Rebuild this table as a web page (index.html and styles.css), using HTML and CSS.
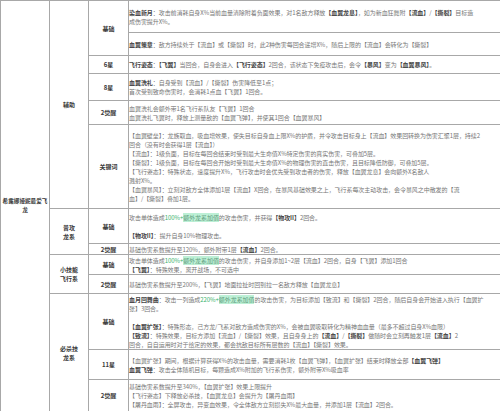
FILE: index.html
```html
<!DOCTYPE html>
<html lang="zh">
<head>
<meta charset="utf-8">
<title>希露娜娅妮最爱飞龙</title>
<link rel="stylesheet" href="styles.css">
</head>
<body>
<table class="sheet">
  <colgroup>
    <col class="w1"><col class="w2"><col class="w3"><col class="w4">
  </colgroup>
  <tbody>
    <tr class="h32">
      <td class="lbl hero" rowspan="13">希露娜娅妮最爱飞龙</td>
      <td class="lbl" rowspan="6">辅助</td>
      <td class="lbl" rowspan="2">基础</td>
      <td class="txt"><b>染血新月</b>：攻击前消耗自身X%当前血量清除附着负面效果，对1名敌方释放<b>【血翼龙息】</b>，如为新血狂舞附<b>【流血】</b>/<b>【撕裂】</b>目标造<br>成伤害提升X%。</td>
    </tr>
    <tr class="h23">
      <td class="txt"><b>血翼策章</b>：敌方持续处于【流血】或【撕裂】时，此2种伤害每回合递增X%，随后上限的【流血】会转化为【撕裂】</td>
    </tr>
    <tr class="h18">
      <td class="lbl">6星</td>
      <td class="txt"><b>飞行姿态</b>：<b>【飞翼】</b>当回合，自身会进入<b>【飞行姿态】</b>2回合，该状态下免疫攻击后，会令<b>【暴风】</b>变为<b>【血翼暴风】</b>。</td>
    </tr>
    <tr class="h27">
      <td class="lbl">8星</td>
      <td class="txt"><b>血翼洗礼</b>：自身受到【流血】/【撕裂】伤害降低至1点；<br>首次受到致命伤害时，会消耗1点血【飞翼】1回合。</td>
    </tr>
    <tr class="h24">
      <td class="lbl">2觉醒</td>
      <td class="txt">血翼洗礼会额外带1名飞行系队友【飞翼】1回合<br>血翼洗礼飞翼时，释放上测量敌的【血翼飞弹】，并使其1回合【血翼暴风】</td>
    </tr>
    <tr class="h84">
      <td class="lbl">关键词</td>
      <td class="txt">【血翼壁垒】：龙族取血，吸血增效果，使失目标自身血上限X%的护盾，并令攻击目标身上【流血】效果回转换为伤害汇聚1层，持续2<br>回合（没有时会获得1层【流血】）<br>【流血】：1级负面，目标在每回合结束时受到最大生命值X%特定伤害的真实伤害，可叠加5层。<br>【撕裂】：1级负面，目标在每回合开始时受到最大生命值X%的物理伤害的直击伤害，且目标降低防御，可叠加5层。<br>【飞行姿态】：特殊状态，速度提升X%，飞行攻击时会优先受到攻击者的伤害，释放【血翼龙息】会向额外X名敌人<br>溅射X%。<br>【血翼暴风】：立刻对敌方全体添加1层【流血】X回合，在暴风基础效果之上，飞行系每次主动攻击，会令暴风之中散发的【流<br>血】/【撕裂】叠加1层。</td>
    </tr>
    <tr class="h35">
      <td class="lbl" rowspan="2">普攻<br>龙系</td>
      <td class="lbl">基础</td>
      <td class="txt">攻击单体造成<span class="g">100%+</span><span class="hl">额外龙系加值</span>的攻击伤害，并获得<b>【物攻II】</b>2回合。<br><br><b>【物攻II】</b>：提升自身10%物理攻击。</td>
    </tr>
    <tr class="h11">
      <td class="lbl">2觉醒</td>
      <td class="txt">基础伤害系数提升至120%，额外附带1层<b>【流血】</b>2回合。</td>
    </tr>
    <tr class="h20">
      <td class="lbl" rowspan="2">小技能<br>飞行系</td>
      <td class="lbl">基础</td>
      <td class="txt">攻击单体造成<span class="g">100%+</span><span class="hl">额外龙系加值</span>的攻击伤害，并自身添加1~2层【流血】2回合，自身【飞翼】添加1回合<br><b>【飞翼】</b>：特殊效果，离开战场，不可选中</td>
    </tr>
    <tr class="h19">
      <td class="lbl">2觉醒</td>
      <td class="txt">基础伤害系数提升至200%，【飞翼】地面拉扯时回到拉一名敌方释放【血翼龙息】</td>
    </tr>
    <tr class="h56">
      <td class="lbl" rowspan="3">必杀技<br>龙系</td>
      <td class="lbl">基础</td>
      <td class="txt"><b>血月回舞曲</b>：攻击一列造成<span class="g">220%+</span><span class="hl">额外龙系加值</span>的攻击伤害，为目标添加【致流】和【撕裂】2回合，随后自身会开始进入执行【血翼扩<br>张】3回合。<br><br><b>【血翼扩张】</b>：特殊形态，己方龙/飞系对敌方造成伤害的X%，会被血翼吸取转化为精神血血量（最多不超过自身X%血限）<br><b>【致流】</b>：特殊效果，目标方添加【流血】/【撕裂】效果，且自身身上的<b>【流血】</b>/<b>【撕裂】</b>做随时会立刻再触发1层<b>【流血】</b>2<br>回合，自自运用时对于给定的效果，都会抗敌目标所有层数的【流血】【撕裂】效果。</td>
    </tr>
    <tr class="h30">
      <td class="lbl">11星</td>
      <td class="txt">【血翼扩张】期间，根据计算获得X%的攻击血量，需要消耗1枚【血翼飞弹】，【血翼扩张】结束时释放全部<b>【血翼飞弹】</b><br><b>血翼飞弹</b>：攻击全体随机目标，每颗造成X%附加的飞行系伤害，额外附带X%吸血率</td>
    </tr>
    <tr class="h32">
      <td class="lbl">2觉醒</td>
      <td class="txt">基础伤害系数提升至340%，【血翼扩张】效果上限提升<br>【飞行姿态】下释放必杀技，【血翼龙息】会提升为【屠丹血雨】<br>【屠丹血雨】：全屏攻击，异变血效果，令全体敌方立刻损失X%最大血量，并添加1层【流血】2回合。</td>
    </tr>
  </tbody>
</table>
</body>
</html>
```

FILE: styles.css
```css
html, body {
  margin: 0;
  padding: 0;
  background: #ffffff;
}

.sheet {
  border-collapse: collapse;
  table-layout: fixed;
  width: 500px;
  font-family: "Noto Sans CJK SC", "Noto Sans", sans-serif;
  font-size: 6px;
  line-height: 9px;
  color: #777777;
}

.w1 { width: 49px; }
.w2 { width: 39px; }
.w3 { width: 40px; }
.w4 { width: 372px; }

.sheet td {
  border: 1px solid #a8a8a8;
  vertical-align: middle;
  padding: 0;
}

.lbl {
  text-align: center;
  font-weight: bold;
  color: #3a3a3a;
  padding: 0 1px;
}

.hero {
  font-size: 5.6px;
  padding: 0;
}

.txt {
  text-align: left;
  padding: 0 1px 0 2px;
  letter-spacing: -0.06px;
}

.txt b {
  font-weight: bold;
  color: #454545;
}

.g {
  color: #37b26c;
}

.hl {
  background: #bdf0d6;
  color: #5f9c7c;
}

.h11 { height: 11px; }
.h18 { height: 18px; }
.h19 { height: 19px; }
.h20 { height: 20px; }
.h23 { height: 23px; }
.h24 { height: 24px; }
.h27 { height: 27px; }
.h30 { height: 30px; }
.h32 { height: 32px; }
.h35 { height: 35px; }
.h56 { height: 56px; }
.h84 { height: 84px; }
```
